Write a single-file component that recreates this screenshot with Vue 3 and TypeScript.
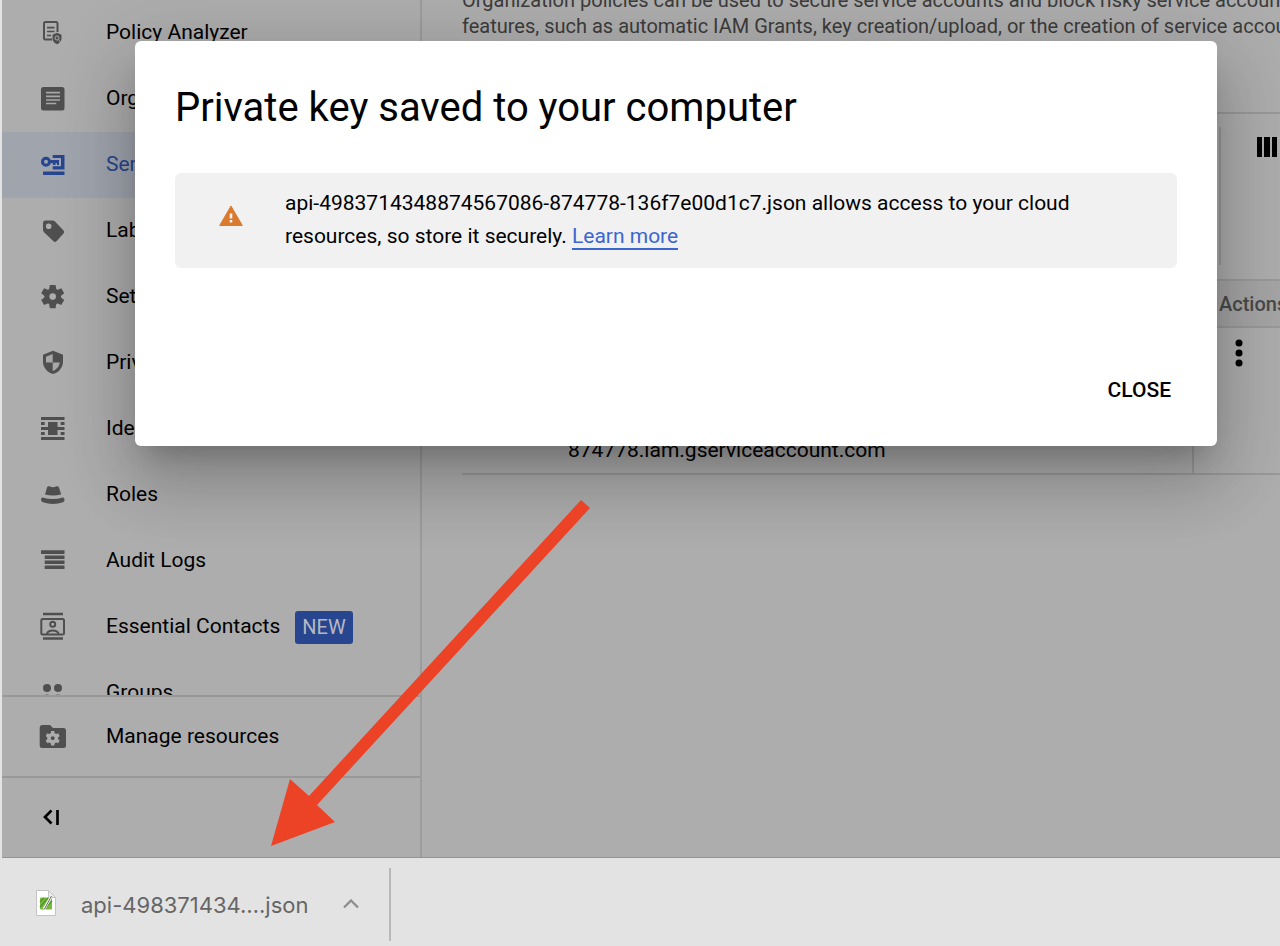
<script setup lang="ts">
interface NavItem {
  label: string
  icon: string
  active?: boolean
  badge?: string
}

const items: NavItem[] = [
  { label: 'Policy Analyzer', icon: 'analyzer' },
  { label: 'Organization Policies', icon: 'article' },
  { label: 'Service Accounts', icon: 'key', active: true },
  { label: 'Labels', icon: 'tag' },
  { label: 'Settings', icon: 'gear' },
  { label: 'Privacy & Security', icon: 'shield' },
  { label: 'Identity-Aware Proxy', icon: 'proxy' },
  { label: 'Roles', icon: 'hat' },
  { label: 'Audit Logs', icon: 'logs' },
  { label: 'Essential Contacts', icon: 'contacts', badge: 'NEW' },
  { label: 'Groups', icon: 'groups' },
]
const teeth = [0, 60, 120, 180, 240, 300]
</script>

<template>
  <div class="window">
    <div class="console">
      <aside class="sidebar">
        <nav class="nav">
          <a v-for="item in items" :key="item.label" href="#" class="item" :class="{ active: item.active }">
            <svg class="icon" viewBox="0 0 28 28" aria-hidden="true">
              <g v-if="item.icon === 'analyzer'">
                <path d="M13 20.5H6.500Q5 20.500 5 19V4.500Q5 3 6.500 3H17Q18.500 3 18.500 4.500V13" fill="none" stroke="currentColor" stroke-width="2" />
                <path d="M8 8.700h7.500M8 12.500h7.500M8 16.500h4" stroke="currentColor" stroke-width="1.700" />
                <path d="M18 13.700l4.500 2v3.500q0 4-4.500 6q-4.500-2-4.500-6v-3.500z" fill="currentColor" />
                <circle cx="18" cy="19" r="2" fill="none" stroke="#a8a8a8" stroke-width="1" />
                <path d="M19.500 20.500l2 2.500" stroke="#a8a8a8" />
              </g>
              <g v-else-if="item.icon === 'article'">
                <rect x="2" y="2" width="23.500" height="23.500" rx="2.500" fill="currentColor" />
                <path d="M7 7.700h14M7 11.300h14M7 15h14M7 18.500h10.300" stroke="#a8a8a8" stroke-width="1.700" />
              </g>
              <g v-else-if="item.icon === 'key'">
                <circle cx="7" cy="10.700" r="3.500" fill="none" stroke="currentColor" stroke-width="3" />
                <path d="M10.500 9H20v5h-2v-1.700h-1.500V14H14v-1.700h-3.500z" fill="currentColor" />
                <path d="M13.700 4H25.500V18.500H13.700V15.300H22V7H13.700zM4 20.500H25.500V24H4z" fill="currentColor" />
              </g>
              <path v-else-if="item.icon === 'tag'" fill="currentColor" fill-rule="evenodd" d="M6.500 3.500H13.500Q15 3.500 16 4.500L24.500 13.500Q26 15 24.500 16.500L17.500 24.300Q16 25.700 14.500 24.300L5 15.200Q4 14 4 13V6Q4 3.500 6.500 3.500ZM9.700 6.500A2.800 2.800 0 1 0 9.700 12.100A2.800 2.800 0 1 0 9.700 6.500Z" />
              <g v-else-if="item.icon === 'gear'" transform="translate(13.700 13.600)">
                <circle r="5.800" fill="none" stroke="currentColor" stroke-width="5" />
                <path v-for="a in teeth" :key="a" :transform="`rotate(${a})`" d="M-3.700-6.500L-2.900-11.600H2.900L3.700-6.500Z" fill="currentColor" />
              </g>
              <g v-else-if="item.icon === 'shield'">
                <path d="M14 1.700L24 5.800V12.500C24 18.300 20 23.500 14 25C8 23.500 4 18.300 4 12.500V5.800Z" fill="currentColor" />
                <path d="M13.700 5V13.500H7V7.800ZM13.700 13.500H20.800C20.200 17.500 17.500 20.800 13.700 22Z" fill="#a8a8a8" />
              </g>
              <path v-else-if="item.icon === 'proxy'" fill="currentColor" d="M2 2H25.500V5H2zM2 22H25.500V25H2zM9 7H18.500V12H25.500V15H18.500V20H9V15H2V12H9zM2 7H5.700V10H2zM21.700 7H25.500V10H21.700zM2 17H5.700V20H2zM21.700 17H25.500V20H21.700z" />
              <path v-else-if="item.icon === 'hat'" fill="currentColor" d="M6 13.500L8 6.500Q8.500 5 10.500 5.300Q14 7 17.500 5.300Q19.500 5 20 6.500L22.200 13.500Q18 14.500 14 14.500T6 13.500ZM3.700 16.500Q14 19.500 23.700 16.500Q25.500 16.500 25.500 18.500Q25.500 20.500 24 21.300Q14 24.500 4 21.300Q2 20.500 2 18.500Q2 16.500 3.700 16.500Z" />
              <path v-else-if="item.icon === 'logs'" fill="currentColor" d="M2 3.300H25.500V7H2zM5.700 8.500H25.500V12H5.700zM5.700 13.500H25.500V17H5.700zM5.700 18.500H25.500V22H5.700z" />
              <g v-else-if="item.icon === 'contacts'" fill="none" stroke="currentColor" stroke-width="2">
                <path d="M4 1H24M4 25.500H24" stroke-width="2.400" />
                <rect x="2.300" y="6" width="22.700" height="15.500" rx="1.500" />
                <circle cx="13.700" cy="11.300" r="2.500" />
                <path d="M7.800 21Q9 17.500 13.700 17.500T19.700 21" />
              </g>
              <g v-else fill="currentColor">
                <circle cx="8" cy="9" r="4" /><circle cx="19" cy="9" r="4" />
                <circle cx="8" cy="19.500" r="4" /><circle cx="19" cy="19.500" r="4" />
              </g>
            </svg>
            <span class="label">{{ item.label }}</span>
            <span v-if="item.badge" class="badge">{{ item.badge }}</span>
          </a>
        </nav>
        <a href="#" class="item pinned">
          <svg class="icon" viewBox="0 0 28 28" aria-hidden="true">
            <path d="M3 2H11L14 5H24.500Q27 5 27 7.500V22.500Q27 25 24.500 25H3Q.700 25 .700 22.500V4.500Q.700 2 3 2Z" fill="currentColor" />
            <g transform="translate(13.700 15.200)">
              <circle r="3.700" fill="none" stroke="#adadad" stroke-width="3.600" />
              <path v-for="a in teeth" :key="a" :transform="`rotate(${a})`" d="M-2-4.500L-1.600-7.200H1.600L2-4.500Z" fill="#adadad" />
            </g>
          </svg>
          <span class="label">Manage resources</span>
        </a>
        <button type="button" class="item pinned collapse" aria-label="Collapse navigation">
          <svg class="icon" viewBox="0 0 28 28" aria-hidden="true">
            <path d="M12.500 6.500L6 13L12.500 19.500M18.500 6V21" fill="none" stroke="currentColor" stroke-width="2.700" />
          </svg>
        </button>
      </aside>

      <main class="content">
        <p class="intro">
          Organization policies can be used to secure service accounts and block risky service account<br>
          features, such as automatic IAM Grants, key creation/upload, or the creation of service accounts
        </p>
        <div class="filter">
          <div class="filter-edge"></div>
          <button type="button" class="columns" aria-label="Column display options">
            <svg viewBox="0 0 20 20"><path d="M0 0H5V20H0zM7 0H13V20H7zM15 0H20V20H15z" fill="currentColor" /></svg>
          </button>
        </div>
        <table class="accounts">
          <thead>
            <tr><th class="email"></th><th>Actions</th></tr>
          </thead>
          <tbody>
            <tr>
              <td class="email">874778.iam.gserviceaccount.com</td>
              <td class="actions">
                <button type="button" aria-label="Actions">
                  <svg viewBox="0 0 8 28"><circle cx="4" cy="4" r="3.500" /><circle cx="4" cy="14" r="3.500" /><circle cx="4" cy="24" r="3.500" /></svg>
                </button>
              </td>
            </tr>
          </tbody>
        </table>
      </main>
    </div>

    <footer class="downloads">
      <button type="button" class="download">
        <svg class="file" viewBox="0 0 22 28" aria-hidden="true">
          <path d="M1.500 1.500H13.500L20.500 8.500V26.500H1.500Z" fill="#fff" stroke="#c4c4c4" />
          <path d="M13.500 1.500V8.500H20.500Z" fill="#eee" stroke="#c4c4c4" />
          <rect x="5" y="8.500" width="12" height="12" rx="1" fill="#79ba3d" />
          <path d="M5 13L9 9M5 18L13 9M9 20L17 12" stroke="#4d962a" stroke-width="1.300" />
          <path d="M9 20L16 8" stroke="#fff" stroke-width="2.500" /><path d="M9.500 20L16.500 7" stroke="#666" stroke-width="1" />
        </svg>
        <span>api-498371434….json</span>
      </button>
      <button type="button" class="more" aria-label="Download options">
        <svg viewBox="0 0 16 10"><path d="M1 8.500L8 1.500L15 8.500" fill="none" stroke="#8d8d8d" stroke-width="2.300" /></svg>
      </button>
    </footer>

    <section class="dialog" role="dialog" aria-modal="true" aria-labelledby="dialog-title">
      <h1 id="dialog-title">Private key saved to your computer</h1>
      <div class="notice">
        <svg class="warning" viewBox="0 0 24 22" aria-hidden="true">
          <path d="M12 1L23.300 20.500H.700Z" fill="#d97a2e" stroke="#d97a2e" stroke-linejoin="round" />
          <path d="M10.700 8.500H13.300V13.500H10.700zM10.700 15H13.300V17.500H10.700z" fill="#f1f1f1" />
        </svg>
        <p>api-4983714348874567086-874778-136f7e00d1c7.json allows access to your cloud<br>resources, so store it securely. <a href="#">Learn more</a></p>
      </div>
      <button type="button" class="close">CLOSE</button>
    </section>

    <svg class="arrow" viewBox="0 0 320 348" aria-hidden="true">
      <path d="M310 0L319 8L46 305L64 322L0 346L19 279L38 296Z" fill="#ec4226" />
    </svg>
  </div>
</template>

<style>
body {
  margin: 0;
}
</style>

<style scoped>
* {
  box-sizing: border-box;
}
.window {
  position: relative;
  display: flex;
  flex-direction: column;
  height: 100vh;
  overflow: hidden;
  border-left: 2px solid #e3e3e3;
  background: #adadad;
  color: #000;
  font-family: Roboto, sans-serif;
  font-size: 21px;
}
button {
  border: 0;
  padding: 0;
  background: none;
  color: inherit;
  font: inherit;
  cursor: pointer;
}
svg {
  display: block;
}
.console {
  display: flex;
  flex: 1;
  min-height: 0;
  border-bottom: 1px solid #949494;
}
.sidebar {
  display: flex;
  flex-direction: column;
  flex: 0 0 420px;
  border-right: 2px solid #9c9c9c;
}
.nav {
  flex: 1;
  min-height: 0;
  overflow: hidden;
}
.item {
  display: flex;
  align-items: center;
  width: 100%;
  height: 66px;
  padding-left: 37px;
  color: #000;
  text-decoration: none;
  white-space: nowrap;
}
.item.active {
  background: #a0a4ad;
  color: #28468f;
}
.icon {
  flex: none;
  width: 28px;
  height: 28px;
  margin-right: 39px;
  overflow: visible;
  color: #4f4f4f;
}
.active .icon {
  color: #28468f;
}
.label {
  padding-bottom: 3px;
}
.badge {
  margin-left: 15px;
  padding: 0 7px;
  border-radius: 3px;
  background: #28468f;
  color: #b4b8c2;
  font-size: 20px;
  line-height: 33px;
}
.pinned {
  flex: none;
  height: 81px;
  border-top: 2px solid #989898;
}
.pinned .label {
  padding-bottom: 1px;
}
.collapse .icon {
  color: #000;
}
.content {
  flex: 1;
  min-width: 0;
  padding-left: 40px;
  overflow: hidden;
}
.intro {
  margin: -13px 0 0;
  color: #3c3c3c;
  font-size: 20px;
  line-height: 26px;
  white-space: nowrap;
}
.filter {
  display: flex;
  justify-content: flex-end;
  align-items: flex-start;
  height: 167px;
  margin-top: 73px;
  padding: 13px 3px 0 0;
  border-top: 2px solid #999;
}
.filter-edge {
  width: 2px;
  height: 138px;
  margin-right: 36px;
  background: #989898;
}
.columns {
  width: 20px;
  margin-top: 10px;
}
.accounts {
  width: 100%;
  border-collapse: separate;
  border-spacing: 0;
  table-layout: fixed;
}
th {
  width: 86px;
  height: 49px;
  padding: 0 0 0 25px;
  border-top: 2px solid #999;
  border-bottom: 2px solid #999;
  background: #a5a5a5;
  color: #4a4a4a;
  font-size: 20px;
  font-weight: 500;
  text-align: left;
}
td {
  height: 147px;
  padding: 0;
  border-bottom: 2px solid #999;
}
th.email {
  width: auto;
}
td.email {
  padding: 0 0 11px 106px;
  border-right: 2px solid #999;
  vertical-align: bottom;
}
.actions {
  padding: 11px 0 0 41px;
  vertical-align: top;
}
.actions svg {
  width: 8px;
}
.downloads {
  display: flex;
  align-items: center;
  height: 88px;
  padding-top: 4px;
  background: #e3e3e3;
  color: #666;
}
.download {
  display: flex;
  align-items: center;
  gap: 24px;
  padding: 2px 0 0 33px;
  font-family: Inter, sans-serif;
  font-size: 22px;
}
.file {
  width: 22px;
  margin-bottom: 4px;
}
.more {
  display: flex;
  align-items: center;
  height: 73px;
  padding: 0 30px 0 35px;
  border-right: 2px solid #b8b8b8;
}
.more svg {
  width: 16px;
}
.dialog {
  position: absolute;
  top: 41px;
  right: 63px;
  left: 133px;
  display: flex;
  flex-direction: column;
  padding: 43px 40px 38px;
  border-radius: 6px;
  background: #fff;
  box-shadow: 0 18px 25px -12px rgba(0, 0, 0, 0.2), 0 40px 63px 5px rgba(0, 0, 0, 0.14), 0 15px 76px 13px rgba(0, 0, 0, 0.12);
}
h1 {
  margin: 0 0 41px;
  font-size: 40px;
  font-weight: 400;
  line-height: 48px;
}
.notice {
  display: flex;
  align-items: center;
  gap: 42px;
  min-height: 95px;
  padding: 14px 44px 15px;
  border-radius: 6px;
  background: #f1f1f1;
}
.warning {
  flex: none;
  width: 24px;
  margin-bottom: 8px;
}
.notice p {
  margin: 0;
  line-height: 33px;
}
.notice a {
  border-bottom: 2px solid #3c66cf;
  color: #3c66cf;
  text-decoration: none;
}
.close {
  align-self: flex-end;
  margin: 104px 6px 0 0;
  font-weight: 500;
  line-height: 36px;
}
.arrow {
  position: absolute;
  top: 500px;
  left: 269px;
  width: 320px;
  height: 348px;
}
</style>
